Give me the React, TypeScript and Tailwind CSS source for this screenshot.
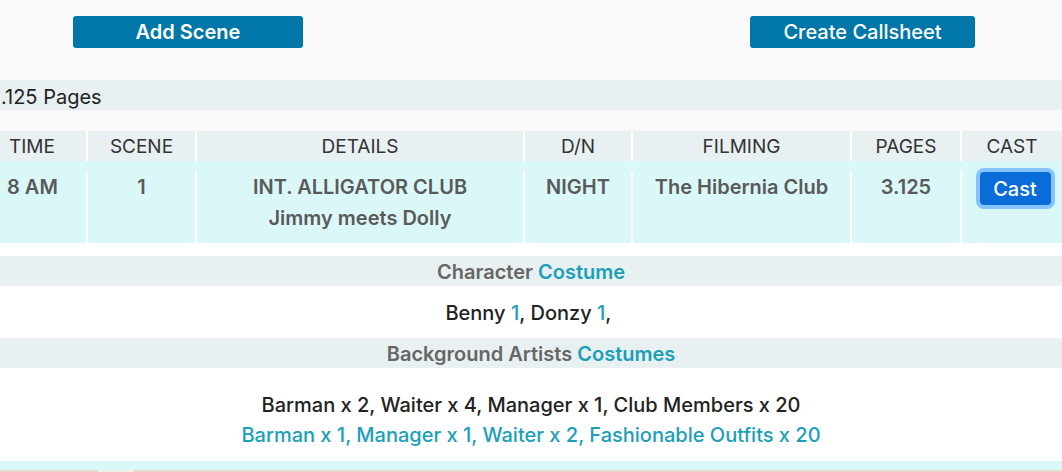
import { Fragment } from 'react';

const cols = ['TIME', 'SCENE', 'DETAILS', 'D/N', 'FILMING', 'PAGES', 'CAST'];

function Teal({ children }: { children: React.ReactNode }) {
  return <span className="text-[#1ba0b9]">{children}</span>;
}

export default function App() {
  return (
    <div
      className="h-[472px] w-[1062px] overflow-hidden bg-[#f9f9f9] text-[20px]"
      style={{ fontFamily: 'Inter, "Open Sans", sans-serif' }}
    >
      {/* top buttons */}
      <div className="flex h-[80px] items-start pt-[16px]">
        <button
          type="button"
          className="ml-[73px] h-[32px] w-[230px] rounded-[3px] bg-[#0077a8] font-semibold leading-none text-white"
        >
          Add Scene
        </button>
        <button
          type="button"
          className="ml-[447px] h-[32px] w-[225px] rounded-[3px] bg-[#0077a8] font-medium leading-none text-white"
        >
          Create Callsheet
        </button>
      </div>

      {/* pages total */}
      <div className="flex h-[30px] items-center bg-[#e8f0f2] pt-[3px] text-[#222]">
        <span className="ml-[1px]">.125 Pages</span>
      </div>

      <div className="h-[21px]" />

      {/* table */}
      <div className="grid grid-cols-[86px_109px_328px_108px_219px_110px_102px] text-[19px]">
        {cols.map((c, i) => (
          <div
            key={c}
            className={
              'flex h-[30px] items-center bg-[#e8f0f2] pt-[2px] text-[#333] ' +
              (i === 0 ? 'justify-start pl-[9px]' : 'justify-center border-l-2 border-white')
            }
          >
            {c}
          </div>
        ))}
      </div>

      <div className="bg-[#dbf8f9] pt-[10px]">
        <div className="grid h-[72px] grid-cols-[86px_109px_328px_108px_219px_110px_102px] font-semibold leading-[31px] text-[#5a5a5a]">
          <div className="pl-[7px] pt-[1px]">8 AM</div>
          <div className="border-l-2 border-white pt-[1px] text-center">1</div>
          <div className="border-l-2 border-white pt-[1px] text-center">
            <div>INT. ALLIGATOR CLUB</div>
            <div>Jimmy meets Dolly</div>
          </div>
          <div className="border-l-2 border-white pt-[1px] text-center">NIGHT</div>
          <div className="border-l-2 border-white pt-[1px] text-center">The Hibernia Club</div>
          <div className="border-l-2 border-white pt-[1px] text-center">3.125</div>
          <div className="flex justify-center border-l-2 border-white pl-[6px] pt-[1px]">
            <button
              type="button"
              className="h-[33px] w-[71px] rounded-[4px] bg-[#0a6cd9] font-medium leading-none text-white ring-4 ring-[#86c3ff]"
            >
              Cast
            </button>
          </div>
        </div>
      </div>

      <div className="h-[13px] bg-white" />

      {/* costumes */}
      <div className="flex h-[30px] items-center justify-center bg-[#e8f0f2] pt-[1px] font-semibold text-[#666]">
        <span>
          Character <Teal>Costume</Teal>
        </span>
      </div>
      <div className="flex h-[52px] items-center justify-center bg-white pt-[1px] font-medium text-[#222]">
        {[
          ['Benny', '1'],
          ['Donzy', '1'],
        ].map(([n, c]) => (
          <Fragment key={n}>
            <span className="whitespace-pre">
              {n} <Teal>{c}</Teal>,{' '}
            </span>
          </Fragment>
        ))}
      </div>
      <div className="flex h-[30px] items-center justify-center bg-[#e8f0f2] pt-[1px] font-semibold text-[#666]">
        <span>
          Background Artists <Teal>Costumes</Teal>
        </span>
      </div>
      <div className="h-[93px] bg-white pt-[22px] text-center font-medium leading-[30px]">
        <div className="text-[#222]">Barman x 2, Waiter x 4, Manager x 1, Club Members x 20</div>
        <div className="text-[#1ba0b9]">Barman x 1, Manager x 1, Waiter x 2, Fashionable Outfits x 20</div>
      </div>

      <div className="h-[9px] bg-[#dbf8f9]" />
      <div className="flex h-[2px] bg-[#e6dccb]">
        <div className="ml-[98px] w-[35px] bg-[#f3efe8]" />
      </div>
    </div>
  );
}
